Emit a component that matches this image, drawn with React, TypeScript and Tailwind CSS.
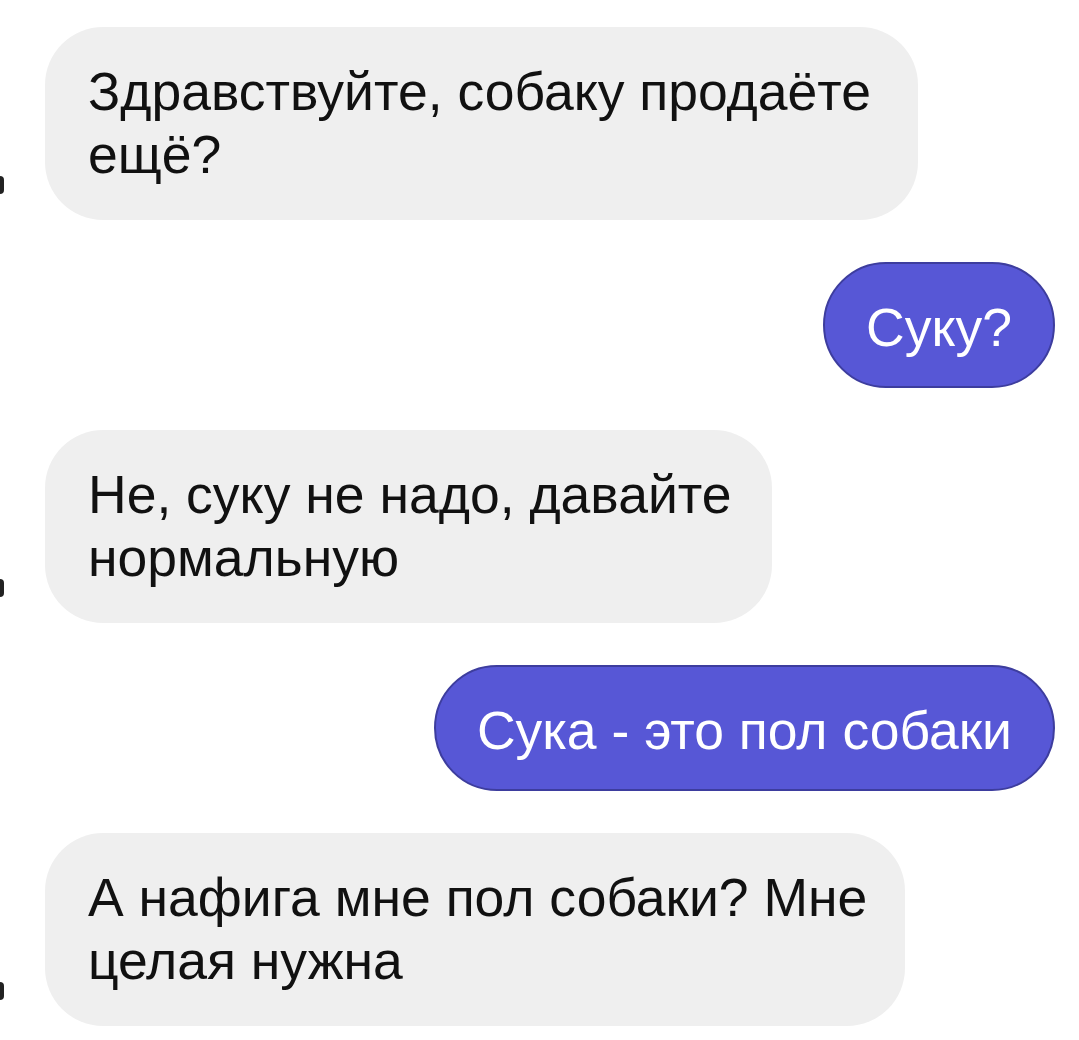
import React from "react";

const font = { fontFamily: "'Liberation Sans', Arial, sans-serif" };

function Gray({ lines, w, mark }: { lines: string[]; w: string; mark?: boolean }) {
  return (
    <div className="flex items-end">
      <div className="w-[45px] shrink-0 flex items-end pb-[26px]">
        {mark && <div className="w-[4px] h-[18px] bg-[#222] rounded-r-sm" />}
      </div>
      <div className={`${w} bg-[#efefef] rounded-[58px] pl-[43px] pr-[20px] pt-[33px] pb-[34px] text-[53.5px] leading-[63px] text-[#111]`}>
        {lines.map((l, i) => (
          <div key={i} className="whitespace-nowrap">{l}</div>
        ))}
      </div>
    </div>
  );
}

function Blue({ text }: { text: string }) {
  return (
    <div className="flex justify-end pr-[24px]">
      <div className="bg-[#5757d6] border-2 border-[#3d3d9e] rounded-full px-[41px] pt-[32px] pb-[27px] text-[53.5px] leading-[63px] text-white whitespace-nowrap">
        {text}
      </div>
    </div>
  );
}

export default function App() {
  return (
    <div className="w-[1079px] h-[1040px] bg-white overflow-hidden pt-[27px] flex flex-col gap-[42px]" style={font}>
      <Gray lines={["Здравствуйте, собаку продаёте", "ещё?"]} w="w-[873px]" mark />
      <Blue text="Суку?" />
      <Gray lines={["Не, суку не надо, давайте", "нормальную"]} w="w-[727px]" mark />
      <Blue text="Сука - это пол собаки" />
      <Gray lines={["А нафига мне пол собаки? Мне", "целая нужна"]} w="w-[860px]" mark />
    </div>
  );
}
